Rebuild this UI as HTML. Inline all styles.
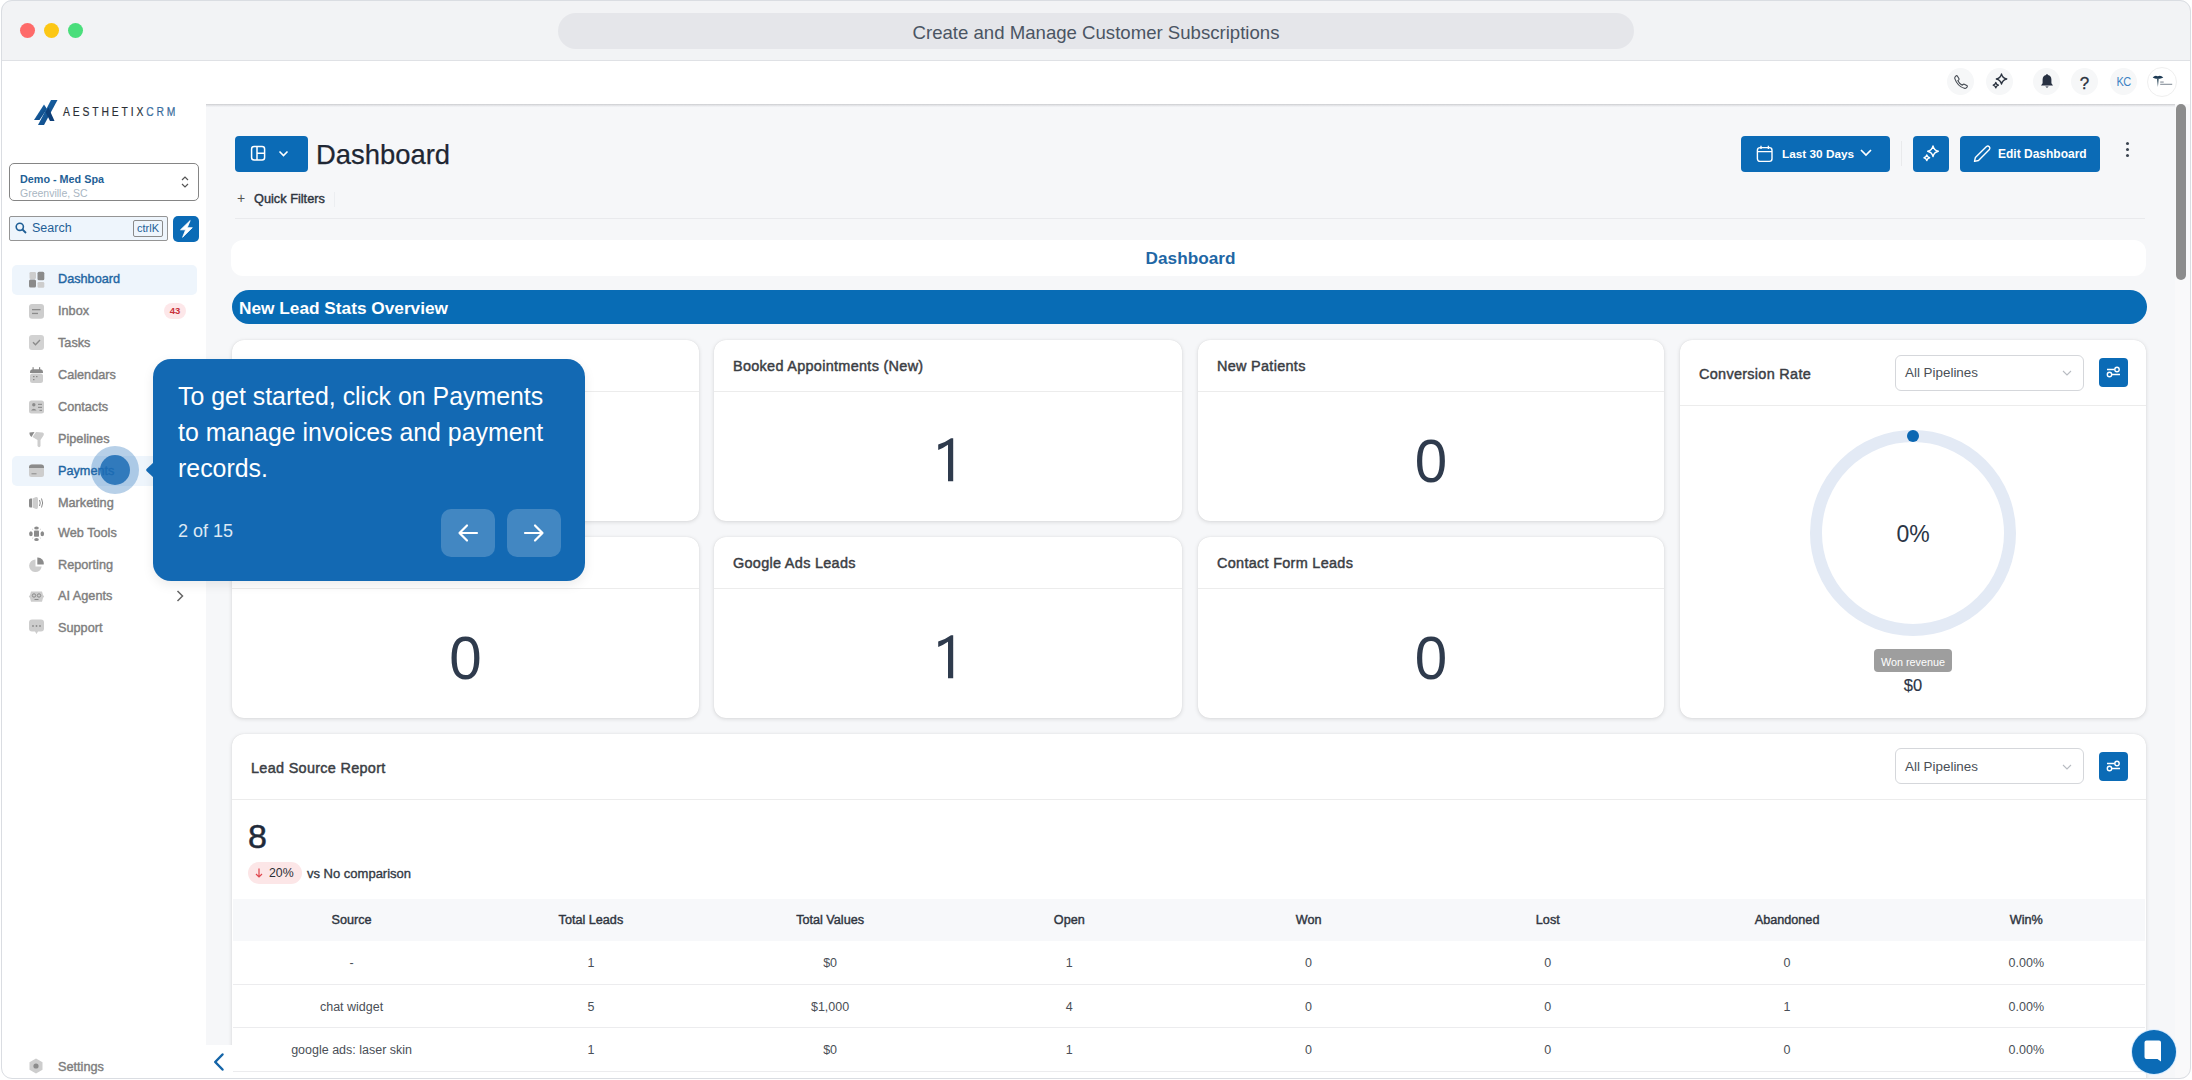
<!DOCTYPE html>
<html><head><meta charset="utf-8">
<style>
*{box-sizing:border-box;margin:0;padding:0}
html,body{width:2192px;height:1080px;overflow:hidden;background:#fff;font-family:"Liberation Sans",sans-serif}
.a{position:absolute}
#win{position:absolute;left:0;top:0;width:2192px;height:1080px;clip-path:inset(0px 1px 1px 1px round 11px);background:#fff}
#frame{position:absolute;left:1px;top:0px;width:2190px;height:1079px;border:1px solid #dadde2;border-radius:11px;pointer-events:none}
#titlebar{position:absolute;left:0;top:0;width:2192px;height:61px;background:#f2f3f5;border-bottom:1px solid #dfe1e5}
.tl{position:absolute;top:23px;width:15px;height:15px;border-radius:50%}
#pill{position:absolute;left:558px;top:13px;width:1076px;height:36px;border-radius:18px;background:#e5e6ea;color:#4b5563;font-size:18.6px;text-align:center;line-height:39px}
#main{position:absolute;left:206px;top:104px;width:1986px;height:976px;background:#f6f7f9;overflow:hidden}
#hdrshadow{position:absolute;left:206px;top:104px;width:1986px;height:3px;background:linear-gradient(#cbcccf,#e6e7ea 55%,#f4f5f7)}
.hic{position:absolute;top:68px;width:27px;height:27px;border-radius:50%;background:#f6f7f8}
.nav{position:absolute;left:11px;width:186px;height:30px;border-radius:5px}
.nav svg{position:absolute;left:18px;top:7px;width:15px;height:16px}
.nav .tx{position:absolute;left:46px;top:0;line-height:30px;font-size:12.2px;font-weight:bold;color:#7b7b7b;white-space:nowrap}
.navt{left:58px;line-height:17px;font-size:12.7px;font-weight:normal;-webkit-text-stroke:0.4px #7e7e7e;color:#7e7e7e;white-space:nowrap}
.th{width:200px;text-align:center;font-size:12.65px;-webkit-text-stroke:0.4px #2f3540;color:#2f3540;line-height:15px;white-space:nowrap;margin-top:1px}
.td{width:200px;text-align:center;font-size:12.5px;color:#4a4f57;line-height:15px;white-space:nowrap;margin-top:1px}
.card{position:absolute;background:#fff;border-radius:12px;box-shadow:0 1px 4px rgba(0,0,0,0.13),0 0 1px rgba(0,0,0,0.10)}
.card .ct{position:absolute;left:19px;top:1px;height:51px;line-height:51px;font-size:14.45px;font-weight:normal;-webkit-text-stroke:0.45px #3b3e44;color:#3b3e44;letter-spacing:0.3px;white-space:nowrap}
.card .dv{position:absolute;left:0;top:51px;width:100%;height:1px;background:#ececec}
.card .num{position:absolute;left:0;width:100%;text-align:center;font-size:62px;color:#2f3b4d;line-height:1;transform:scaleX(0.94)}
.btn{position:absolute;background:#0b6bb6;border-radius:4px;color:#fff}
</style></head><body>
<div id="win">
  <div id="titlebar">
    <div class="tl" style="left:20px;background:#fe6a69"></div>
    <div class="tl" style="left:44px;background:#fcc715"></div>
    <div class="tl" style="left:68px;background:#4ade7b"></div>
    <div id="pill">Create and Manage Customer Subscriptions</div>
  </div>
  <!-- HEADER -->
  <div class="a" style="left:0;top:61px;width:2192px;height:43px;background:#fff"></div>
  <div class="hic" style="left:1947px"></div>
  <div class="hic" style="left:1986px"></div>
  <div class="hic" style="left:2033px"></div>
  <div class="hic" style="left:2071px"></div>
  <div class="hic" style="left:2110px"></div>
  <div class="hic" style="left:2147px;top:67px;width:30px;height:30px;background:#fff;border:1px solid #efefef"></div>
  <svg class="a" style="left:1953px;top:74px" width="16" height="16" viewBox="0 0 16 16"><path d="M4.2 1.8 L6 4.8 Q6.3 5.5 5.6 6.1 L4.9 6.7 Q6.4 9.8 9.3 11.2 L10 10.5 Q10.6 9.9 11.3 10.2 L14.2 11.8 Q14.6 12.2 14.2 12.8 L13.3 13.9 Q12.5 14.6 11.3 14.3 Q4.5 12.2 1.8 4.6 Q1.5 3.4 2.3 2.6 L3.3 1.8 Q3.8 1.4 4.2 1.8 Z" fill="none" stroke="#444a52" stroke-width="1.1"/></svg>
  <svg class="a" style="left:1991px;top:73px" width="18" height="17" viewBox="0 0 18 17"><path d="M10.5 1 Q11.5 5.2 15.8 6 Q11.5 7 10.5 11 Q9.5 7 5.3 6 Q9.5 5.2 10.5 1 Z" fill="none" stroke="#2b3340" stroke-width="1.3" stroke-linejoin="round"/><path d="M4.8 9.5 Q5.3 11.6 7.4 12.2 Q5.3 12.8 4.8 14.9 Q4.3 12.8 2.2 12.2 Q4.3 11.6 4.8 9.5 Z" fill="none" stroke="#2b3340" stroke-width="1.3" stroke-linejoin="round"/></svg>
  <svg class="a" style="left:2039px;top:73px" width="16" height="17" viewBox="0 0 16 17"><path d="M8 1 Q8.8 1 8.9 1.9 Q12.3 2.6 12.4 6.5 L12.4 10.2 L14 12.6 L2 12.6 L3.6 10.2 L3.6 6.5 Q3.7 2.6 7.1 1.9 Q7.2 1 8 1 Z" fill="#283142"/><path d="M6.3 13.6 Q8 15.8 9.7 13.6 Z" fill="#283142"/></svg>
  <div class="a" style="left:2071px;top:71.5px;width:27px;text-align:center;font-size:17px;color:#2b3340;line-height:24px;-webkit-text-stroke:0.3px #2b3340">?</div>
  <div class="a" style="left:2110px;top:70px;width:27px;text-align:center;font-size:12.5px;color:#3d82c4;line-height:24px;letter-spacing:-0.8px;transform:scaleX(0.88)">KC</div>
  <svg class="a" style="left:2150px;top:73px" width="26" height="16" viewBox="0 0 26 16"><path d="M2.7 4.6 Q5 1.6 7.8 3.3 Q10.6 1.6 13.3 4.6 Q10.5 6.4 7.8 5.4 Q5.1 6.4 2.7 4.6 Z" fill="#1e3b55"/><path d="M7 5.3 L8.7 5.3 L7.9 14 Z" fill="#2a4658"/><rect x="10.2" y="8.6" width="3.5" height="0.9" fill="#6b7783"/><rect x="10.2" y="10.8" width="12" height="0.9" fill="#6b7783"/></svg>
  <!-- MAIN -->
  <div id="main"></div>
  <div id="hdrshadow"></div>
  <!-- title row -->
  <div class="btn" style="left:235px;top:136px;width:73px;height:36px"></div>
  <svg class="a" style="left:250px;top:145px" width="40" height="18" viewBox="0 0 40 18"><rect x="1.6" y="1.6" width="13" height="13.5" rx="2.5" fill="none" stroke="#fff" stroke-width="1.5"/><path d="M7 1.6 L7 15 M7 8.3 L14.6 8.3" stroke="#fff" stroke-width="1.5"/><path d="M29.5 6.5 L33.5 10.5 L37.5 6.5" fill="none" stroke="#fff" stroke-width="1.6"/></svg>
  <div class="a" style="left:316px;top:137px;font-size:27.4px;color:#1f2733;line-height:36px;-webkit-text-stroke:0.25px #1f2733;white-space:nowrap">Dashboard</div>
  <div class="a" style="left:237px;top:190px;font-size:14px;color:#555;line-height:16px">+</div>
  <div class="a" style="left:254px;top:190.5px;font-size:12.75px;-webkit-text-stroke:0.4px #2e3540;color:#2e3540;line-height:15px;white-space:nowrap">Quick Filters</div>
  <div class="a" style="left:334px;top:192px;width:1px;height:15px;background:#eceef1"></div>
  <div class="a" style="left:235px;top:218px;width:1910px;height:1px;background:#e9eaed"></div>
  <!-- right buttons -->
  <div class="btn" style="left:1741px;top:136px;width:149px;height:36px"></div>
  <svg class="a" style="left:1756px;top:145px" width="18" height="18" viewBox="0 0 18 18"><rect x="1.4" y="2.6" width="14.6" height="13.8" rx="2.6" fill="none" stroke="#fff" stroke-width="1.4"/><path d="M1.4 6.6 L16 6.6 M5 0.8 L5 4 M12.4 0.8 L12.4 4" stroke="#fff" stroke-width="1.4"/></svg>
  <div class="a" style="left:1782px;top:146px;font-size:11.8px;font-weight:bold;color:#fff;line-height:16px;white-space:nowrap">Last 30 Days</div>
  <svg class="a" style="left:1859px;top:147px" width="14" height="12" viewBox="0 0 14 12"><path d="M2 3 L7 8 L12 3" fill="none" stroke="#fff" stroke-width="1.7"/></svg>
  <div class="a" style="left:1901px;top:141px;width:1px;height:25px;background:#e9eaec"></div>
  <div class="btn" style="left:1913px;top:136px;width:36px;height:36px"></div>
  <svg class="a" style="left:1921px;top:144px" width="20" height="20" viewBox="0 0 20 20"><path d="M12 2 Q13 6.3 17.3 7.3 Q13 8.3 12 12.5 Q11 8.3 6.7 7.3 Q11 6.3 12 2 Z" fill="none" stroke="#fff" stroke-width="1.4" stroke-linejoin="round"/><path d="M5.8 11 Q6.3 13.3 8.6 13.8 Q6.3 14.3 5.8 16.6 Q5.3 14.3 3 13.8 Q5.3 13.3 5.8 11 Z" fill="none" stroke="#fff" stroke-width="1.4" stroke-linejoin="round"/></svg>
  <div class="btn" style="left:1960px;top:136px;width:140px;height:36px"></div>
  <svg class="a" style="left:1972px;top:144px" width="20" height="20" viewBox="0 0 20 20"><path d="M14.5 2.5 Q16 1.5 17.3 2.8 Q18.5 4.2 17.4 5.6 L6.5 16.5 L2.5 17.4 L3.4 13.4 Z" fill="none" stroke="#fff" stroke-width="1.4" stroke-linejoin="round"/></svg>
  <div class="a" style="left:1998px;top:146px;font-size:12px;font-weight:bold;color:#fff;line-height:16px;white-space:nowrap">Edit Dashboard</div>
  <div class="a" style="left:2125.5px;top:141.5px;width:3.5px;height:3.5px;border-radius:50%;background:#3b4450"></div>
  <div class="a" style="left:2125.5px;top:147.5px;width:3.5px;height:3.5px;border-radius:50%;background:#3b4450"></div>
  <div class="a" style="left:2125.5px;top:153.5px;width:3.5px;height:3.5px;border-radius:50%;background:#3b4450"></div>
  <!-- scrollbar -->
  <div class="a" style="left:2175px;top:104px;width:15px;height:976px;background:#f9f9fa"></div>
  <div class="a" style="left:2176px;top:104px;width:10px;height:176px;border-radius:5px;background:#8c8c8c"></div>
  <!-- dashboard label -->
  <div class="a" style="left:231px;top:240px;width:1915px;height:36px;border-radius:12px;background:#fff"></div>
  <div class="a" style="left:231px;top:248px;width:1919px;text-align:center;font-size:17.2px;font-weight:bold;color:#1f67a5;line-height:20px">Dashboard</div>
  <!-- section bar -->
  <div class="a" style="left:232px;top:290px;width:1915px;height:34px;border-radius:17px;background:#086cb5"></div>
  <div class="a" style="left:239px;top:298px;font-size:17.25px;font-weight:bold;color:#fff;line-height:21px;white-space:nowrap">New Lead Stats Overview</div>
  <!-- cards row 1 -->
  <div class="card" style="left:232px;top:340px;width:467px;height:181px"><div class="dv"></div><div class="num" style="top:89.5px">0</div></div>
  <div class="card" style="left:714px;top:340px;width:468px;height:181px"><div class="ct">Booked Appointments (New)</div><div class="dv"></div></div><svg class="a" style="left:938px;top:438px" width="20" height="46" viewBox="0 0 20 46"><path d="M15.2 0.2 L15.2 43.2 L10 43.2 L10 6.8 Q5.5 10 0.2 12 L0.2 6.6 Q7 4.5 13 0.2 Z" fill="#2f3b4d"/></svg>
  <div class="card" style="left:1198px;top:340px;width:466px;height:181px"><div class="ct">New Patients</div><div class="dv"></div><div class="num" style="top:89.5px">0</div></div>
  <div class="card" style="left:232px;top:537px;width:467px;height:181px"><div class="ct">Paid Ads Leads</div><div class="dv"></div><div class="num" style="top:89.5px">0</div></div>
  <div class="card" style="left:714px;top:537px;width:468px;height:181px"><div class="ct">Google Ads Leads</div><div class="dv"></div></div><svg class="a" style="left:938px;top:635px" width="20" height="46" viewBox="0 0 20 46"><path d="M15.2 0.2 L15.2 43.2 L10 43.2 L10 6.8 Q5.5 10 0.2 12 L0.2 6.6 Q7 4.5 13 0.2 Z" fill="#2f3b4d"/></svg>
  <div class="card" style="left:1198px;top:537px;width:466px;height:181px"><div class="ct">Contact Form Leads</div><div class="dv"></div><div class="num" style="top:89.5px">0</div></div>
  <!-- conversion card -->
  <div class="card" style="left:1680px;top:340px;width:466px;height:378px"><div class="ct" style="height:66px;line-height:66px">Conversion Rate</div><div class="dv" style="top:65px"></div></div>
  <div class="a" style="left:1895px;top:355px;width:189px;height:36px;border:1px solid #d5d7db;border-radius:6px;background:#fff"></div>
  <div class="a" style="left:1905px;top:365px;font-size:13.4px;color:#4a4f57;line-height:16px;white-space:nowrap">All Pipelines</div>
  <svg class="a" style="left:2061px;top:368px" width="12" height="10" viewBox="0 0 12 10"><path d="M2 3 L6 7 L10 3" fill="none" stroke="#b8bcc2" stroke-width="1.1"/></svg>
  <div class="btn" style="left:2099px;top:358px;width:29px;height:29px"></div>
  <svg class="a" style="left:2104px;top:364px" width="19" height="17" viewBox="0 0 19 17"><path d="M3 5.5 L10.5 5.5 M8 10.5 L16 10.5" stroke="#fff" stroke-width="1.4"/><circle cx="13" cy="5.5" r="2.2" fill="none" stroke="#fff" stroke-width="1.4"/><circle cx="5.5" cy="10.5" r="2.2" fill="none" stroke="#fff" stroke-width="1.4"/></svg>
  <svg class="a" style="left:1803px;top:423px" width="220" height="220" viewBox="0 0 220 220"><circle cx="110" cy="110" r="97" fill="none" stroke="#e3eaf5" stroke-width="12"/><circle cx="110" cy="13" r="6" fill="#0b67b2"/></svg>
  <div class="a" style="left:1813px;top:523px;width:200px;text-align:center;font-size:23px;color:#2b3646;line-height:22px">0%</div>
  <div class="a" style="left:1874px;top:649px;width:78px;height:23px;border-radius:4px;background:#9e9e9e;color:#fff;text-align:center;font-size:10.8px;line-height:26px">Won revenue</div>
  <div class="a" style="left:1813px;top:676px;width:200px;text-align:center;font-size:16.5px;color:#2b3646;line-height:19px;-webkit-text-stroke:0.15px #2b3646">$0</div>
  <!-- lead source card -->
  <div class="card" style="left:232px;top:734px;width:1914px;height:400px"><div class="ct" style="height:66px;line-height:66px">Lead Source Report</div><div class="dv" style="top:65px"></div></div>
  <div class="a" style="left:1895px;top:748px;width:189px;height:36px;border:1px solid #d5d7db;border-radius:6px;background:#fff"></div>
  <div class="a" style="left:1905px;top:759px;font-size:13.4px;color:#4a4f57;line-height:16px;white-space:nowrap">All Pipelines</div>
  <svg class="a" style="left:2061px;top:762px" width="12" height="10" viewBox="0 0 12 10"><path d="M2 3 L6 7 L10 3" fill="none" stroke="#b8bcc2" stroke-width="1.1"/></svg>
  <div class="btn" style="left:2099px;top:752px;width:29px;height:29px"></div>
  <svg class="a" style="left:2104px;top:758px" width="19" height="17" viewBox="0 0 19 17"><path d="M3 5.5 L10.5 5.5 M8 10.5 L16 10.5" stroke="#fff" stroke-width="1.4"/><circle cx="13" cy="5.5" r="2.2" fill="none" stroke="#fff" stroke-width="1.4"/><circle cx="5.5" cy="10.5" r="2.2" fill="none" stroke="#fff" stroke-width="1.4"/></svg>
  <div class="a" style="left:248px;top:818px;font-size:34px;color:#1f2a3a;line-height:36px;-webkit-text-stroke:0.5px #1f2a3a">8</div>
  <div class="a" style="left:248px;top:862px;width:54px;height:22px;border-radius:11px;background:#fce6e7"></div>
  <svg class="a" style="left:254px;top:867px" width="10" height="12" viewBox="0 0 10 12"><path d="M5 1.5 L5 10 M2 7 L5 10 L8 7" fill="none" stroke="#e0484f" stroke-width="1.2"/></svg>
  <div class="a" style="left:269px;top:866px;font-size:12.3px;color:#2b2f36;line-height:15px">20%</div>
  <div class="a" style="left:307px;top:866px;font-size:13px;color:#333a44;line-height:15px;white-space:nowrap;-webkit-text-stroke:0.35px #333a44">vs No comparison</div>
  <!-- table -->
  <div class="a" style="left:233px;top:899px;width:1912px;height:42px;background:#f7f8fa"></div>
  <div class="a" style="left:233px;top:984px;width:1912px;height:1px;background:#ececee"></div>
  <div class="a" style="left:233px;top:1027px;width:1912px;height:1px;background:#ececee"></div>
  <div class="a" style="left:233px;top:1071px;width:1912px;height:1px;background:#ececee"></div>
  <div class="a th" style="left:251.6px;top:912px">Source</div>
  <div class="a th" style="left:490.9px;top:912px">Total Leads</div>
  <div class="a th" style="left:730.1px;top:912px">Total Values</div>
  <div class="a th" style="left:969.3px;top:912px">Open</div>
  <div class="a th" style="left:1208.6px;top:912px">Won</div>
  <div class="a th" style="left:1447.8px;top:912px">Lost</div>
  <div class="a th" style="left:1687.1px;top:912px">Abandoned</div>
  <div class="a th" style="left:1926.3px;top:912px">Win%</div>
  <div class="a td" style="left:251.6px;top:955px">-</div>
  <div class="a td" style="left:490.9px;top:955px">1</div>
  <div class="a td" style="left:730.1px;top:955px">$0</div>
  <div class="a td" style="left:969.3px;top:955px">1</div>
  <div class="a td" style="left:1208.6px;top:955px">0</div>
  <div class="a td" style="left:1447.8px;top:955px">0</div>
  <div class="a td" style="left:1687.1px;top:955px">0</div>
  <div class="a td" style="left:1926.3px;top:955px">0.00%</div>
  <div class="a td" style="left:251.6px;top:999px">chat widget</div>
  <div class="a td" style="left:490.9px;top:999px">5</div>
  <div class="a td" style="left:730.1px;top:999px">$1,000</div>
  <div class="a td" style="left:969.3px;top:999px">4</div>
  <div class="a td" style="left:1208.6px;top:999px">0</div>
  <div class="a td" style="left:1447.8px;top:999px">0</div>
  <div class="a td" style="left:1687.1px;top:999px">1</div>
  <div class="a td" style="left:1926.3px;top:999px">0.00%</div>
  <div class="a td" style="left:251.6px;top:1042px">google ads: laser skin</div>
  <div class="a td" style="left:490.9px;top:1042px">1</div>
  <div class="a td" style="left:730.1px;top:1042px">$0</div>
  <div class="a td" style="left:969.3px;top:1042px">1</div>
  <div class="a td" style="left:1208.6px;top:1042px">0</div>
  <div class="a td" style="left:1447.8px;top:1042px">0</div>
  <div class="a td" style="left:1687.1px;top:1042px">0</div>
  <div class="a td" style="left:1926.3px;top:1042px">0.00%</div>
  <!-- SIDEBAR -->
  <div class="a" style="left:0;top:61px;width:206px;height:1019px;background:#fff"></div>
  <!-- logo -->
  <svg class="a" style="left:33px;top:99px" width="26" height="27" viewBox="0 0 26 27">
    <defs><linearGradient id="lg" x1="0" y1="0" x2="1" y2="1"><stop offset="0" stop-color="#1a6fb5"/><stop offset="1" stop-color="#0d3f78"/></linearGradient></defs>
    <polygon points="1,21 11,5.5 14,10 6.5,21" fill="url(#lg)"/>
    <polygon points="18,1 24.5,1 11,26 5,26" fill="url(#lg)"/>
    <polygon points="12.5,13 15.5,8.5 21.5,22 17,22" fill="#0d3f78"/>
  </svg>
  <div class="a" style="left:63px;top:103px;font-size:12.6px;letter-spacing:3.5px;color:#2b2f36;white-space:nowrap;line-height:18px;transform:scaleX(0.82);transform-origin:left;-webkit-text-stroke:0.2px #2b2f36">AESTHETIX<span style="color:#3d82c4">CRM</span></div>
  <!-- location -->
  <div class="a" style="left:9px;top:163px;width:190px;height:38px;border:1px solid #858585;border-radius:5px;background:#fff"></div>
  <div class="a" style="left:20px;top:172px;font-size:10.8px;font-weight:bold;color:#1f5f96;white-space:nowrap;line-height:14px">Demo - Med Spa</div>
  <div class="a" style="left:20px;top:187px;font-size:10.5px;color:#a9b6c2;white-space:nowrap;line-height:13px">Greenville, SC</div>
  <svg class="a" style="left:180px;top:175px" width="10" height="14" viewBox="0 0 10 14"><path d="M2 5 L5 2 L8 5 M2 9 L5 12 L8 9" fill="none" stroke="#555" stroke-width="1.2"/></svg>
  <!-- search -->
  <div class="a" style="left:9px;top:216px;width:159px;height:25px;border:1px solid #959595;border-radius:2px;background:#eef5fc"></div>
  <svg class="a" style="left:15px;top:222px" width="12" height="12" viewBox="0 0 12 12"><circle cx="4.8" cy="4.8" r="3.6" fill="none" stroke="#1f5f96" stroke-width="1.6"/><path d="M7.5 7.5 L11 11" stroke="#1f5f96" stroke-width="1.8"/></svg>
  <div class="a" style="left:32px;top:221px;font-size:12.5px;color:#1f5f96;line-height:15px">Search</div>
  <div class="a" style="left:133px;top:220px;width:30px;height:17px;border:1px solid #8a8a8a;border-radius:2px;font-size:11px;color:#1f5f96;text-align:center;line-height:15px">ctrlK</div>
  <div class="a" style="left:173px;top:216px;width:26px;height:26px;border-radius:5px;background:#0b6bb6"></div>
  <svg class="a" style="left:177px;top:219px" width="18" height="20" viewBox="0 0 18 20"><path d="M13.2 1.5 L3.5 10.8 L8.6 10.8 L5.6 18.3 L15.3 8.7 L10.2 8.7 Z" fill="#fff" stroke="#fff" stroke-width="0.8" stroke-linejoin="round"/></svg>
  <!-- nav -->
  <div class="a" style="left:12px;top:265px;width:185px;height:30px;border-radius:5px;background:#eef5fc"></div>
  <div class="a" style="left:12px;top:456px;width:185px;height:30px;border-radius:5px;background:#eef5fc"></div>
  <div class="a" style="left:58px;top:271px;line-height:17px;font-size:12.7px;-webkit-text-stroke:0.4px #1f66a3;color:#1f66a3">Dashboard</div>
  <div class="a navt" style="top:303px">Inbox</div>
  <div class="a navt" style="top:335px">Tasks</div>
  <div class="a navt" style="top:367px">Calendars</div>
  <div class="a navt" style="top:399px">Contacts</div>
  <div class="a navt" style="top:431px">Pipelines</div>
  <div class="a" style="left:58px;top:463px;line-height:17px;font-size:12.7px;-webkit-text-stroke:0.4px #1f66a3;color:#1f66a3">Payments</div>
  <div class="a navt" style="top:495px">Marketing</div>
  <div class="a navt" style="top:525px">Web Tools</div>
  <div class="a navt" style="top:557px">Reporting</div>
  <div class="a navt" style="top:588px">AI Agents</div>
  <div class="a navt" style="top:620px">Support</div>
  <div class="a navt" style="top:1059px">Settings</div>
  <div class="a" style="left:164px;top:303px;width:22px;height:16px;border-radius:8px;background:#fde7e9;color:#c8323a;font-size:9.5px;font-weight:bold;text-align:center;line-height:16px">43</div>
  <svg class="a" style="left:175px;top:589px" width="10" height="14" viewBox="0 0 10 14"><path d="M2.5 2 L7.5 7 L2.5 12" fill="none" stroke="#666" stroke-width="1.5"/></svg>
  <!-- icons -->
  <svg class="a" style="left:29px;top:271px" width="16" height="17" viewBox="0 0 16 17">
    <rect x="0.5" y="1" width="6.5" height="7" rx="1.3" fill="#cdcdcd"/><rect x="8.5" y="0.8" width="6.8" height="8.5" rx="1.5" fill="#8b8b8b"/>
    <rect x="0" y="8.5" width="7" height="8" rx="1.5" fill="#8b8b8b"/><rect x="8.5" y="11" width="6.8" height="5.8" rx="1.3" fill="#cdcdcd"/>
  </svg>
  <svg class="a" style="left:29px;top:304px" width="16" height="16" viewBox="0 0 16 16">
    <rect x="0" y="0" width="15" height="14.8" rx="3" fill="#cdcdcd"/><rect x="3" y="5" width="8.5" height="1.3" fill="#8b8b8b"/><rect x="3" y="8.8" width="6" height="1.3" fill="#8b8b8b"/>
  </svg>
  <svg class="a" style="left:29px;top:335px" width="16" height="16" viewBox="0 0 16 16">
    <rect x="0" y="0" width="15" height="15" rx="3" fill="#d2d2d2"/><path d="M4 7.3 L6.5 9.8 L11 5" fill="none" stroke="#8b8b8b" stroke-width="1.4"/>
  </svg>
  <svg class="a" style="left:29px;top:367px" width="16" height="16" viewBox="0 0 16 16">
    <rect x="1" y="6.5" width="13" height="9.5" rx="2.5" fill="#cdcdcd"/><path d="M1 5.2 Q1 2.3 4 2.3 L11 2.3 Q14 2.3 14 5.2 L14 6 L1 6 Z" fill="#8b8b8b"/>
    <rect x="3.5" y="0.2" width="1.2" height="3" fill="#8b8b8b"/><rect x="10" y="0.2" width="1.2" height="3" fill="#8b8b8b"/>
    <rect x="4" y="9" width="1.5" height="1.2" fill="#8b8b8b"/><rect x="7" y="9" width="1.5" height="1.2" fill="#8b8b8b"/><rect x="4" y="12" width="1.5" height="1.2" fill="#8b8b8b"/>
  </svg>
  <svg class="a" style="left:29px;top:400px" width="16" height="15" viewBox="0 0 16 15">
    <rect x="0" y="0.5" width="15" height="13" rx="2.5" fill="#cdcdcd"/><circle cx="4.8" cy="4.8" r="1.7" fill="#8b8b8b"/><path d="M2 10.5 Q4.8 7 7.6 10.5 Z" fill="#8b8b8b"/>
    <rect x="9" y="3.8" width="4" height="1.1" fill="#8b8b8b"/><rect x="9" y="6.8" width="4" height="1.1" fill="#8b8b8b"/><rect x="10.5" y="9.8" width="2.5" height="1.1" fill="#8b8b8b"/>
  </svg>
  <svg class="a" style="left:29px;top:431px" width="16" height="17" viewBox="0 0 16 17">
    <path d="M0.5 1.5 L5.5 1 L2.5 6 Q1 5 0.5 3 Z" fill="#8b8b8b"/><path d="M7 1 L13.5 1.5 Q15.5 2 14.5 4.5 L11.5 9 L11.5 15 Q11 16.5 9.5 16 L8.5 15 L8.5 9 L3.5 6 Z" fill="#cdcdcd"/>
  </svg>
  <svg class="a" style="left:29px;top:464px" width="16" height="14" viewBox="0 0 16 14">
    <rect x="0" y="0.5" width="15" height="12.5" rx="2.5" fill="#cdcdcd"/><path d="M0 3.5 Q0 0.5 3 0.5 L12 0.5 Q15 0.5 15 3.5 L15 4 L0 4 Z" fill="#8b8b8b"/><rect x="2.5" y="9.3" width="5" height="1" fill="#8b8b8b"/>
  </svg>
  <svg class="a" style="left:28px;top:496px" width="17" height="14" viewBox="0 0 17 14">
    <path d="M1 4 Q1 2.5 2.5 2.5 L4 2.5 L4 11.5 L2.5 11.5 Q1 11.5 1 10 Z" fill="#8b8b8b"/><path d="M4.5 2.5 L8 1 Q10 0.5 10 3 L10 11 Q10 13.5 8 13 L4.5 11.5 Z" fill="#cdcdcd"/>
    <path d="M11.5 4 Q13 7 11.5 10" fill="none" stroke="#8b8b8b" stroke-width="1"/><path d="M13.5 2.5 Q15.8 7 13.5 11.5" fill="none" stroke="#8b8b8b" stroke-width="1"/>
  </svg>
  <svg class="a" style="left:29px;top:526px" width="16" height="16" viewBox="0 0 16 16">
    <path d="M3 2.8 L4.3 4 M12 2.8 L10.7 4 M3 12.6 L4.3 11.4 M12 12.6 L10.7 11.4" stroke="#d4d4d4" stroke-width="1"/>
    <ellipse cx="7.5" cy="1.9" rx="2.3" ry="1.5" fill="#8b8b8b"/><rect x="5" y="4.6" width="5" height="6.2" rx="0.8" fill="#8b8b8b"/>
    <ellipse cx="1.9" cy="7.7" rx="1.8" ry="2.5" fill="#8b8b8b"/><ellipse cx="13.3" cy="7.7" rx="1.8" ry="2.5" fill="#8b8b8b"/><ellipse cx="7.5" cy="13.6" rx="2.3" ry="1.5" fill="#8b8b8b"/>
  </svg>
  <svg class="a" style="left:29px;top:557px" width="16" height="16" viewBox="0 0 16 16">
    <path d="M6.5 2.5 A6.3 6.3 0 1 0 12.7 9.5 L6.5 9.5 Z" fill="#cdcdcd"/><path d="M8.3 0.5 A6 6 0 0 1 14.7 7.5 L8.3 7.5 Z" fill="#8b8b8b"/>
  </svg>
  <svg class="a" style="left:28px;top:591px" width="17" height="12" viewBox="0 0 17 12">
    <path d="M3 0.5 L14 0.5 L15 4 L16.2 5.5 L15 7 L14 10.8 L3 10.8 L2 7 L0.8 5.5 L2 4 Z" fill="#cdcdcd"/><circle cx="6" cy="4.5" r="1.7" fill="none" stroke="#8b8b8b" stroke-width="1"/><circle cx="11" cy="4.5" r="1.7" fill="none" stroke="#8b8b8b" stroke-width="1"/><rect x="6.5" y="8" width="4" height="1" fill="#8b8b8b"/>
  </svg>
  <svg class="a" style="left:29px;top:619px" width="16" height="16" viewBox="0 0 16 16">
    <path d="M3 0.5 L12 0.5 Q15 0.5 15 3.5 L15 9.5 Q15 12.5 12 12.5 L9 12.5 L7.5 15 L6 12.5 L3 12.5 Q0 12.5 0 9.5 L0 3.5 Q0 0.5 3 0.5 Z" fill="#cdcdcd"/><circle cx="4" cy="7" r="0.9" fill="#8b8b8b"/><circle cx="7.5" cy="7" r="0.9" fill="#8b8b8b"/><circle cx="11" cy="7" r="0.9" fill="#8b8b8b"/>
  </svg>
  <svg class="a" style="left:28px;top:1058px" width="16" height="16" viewBox="0 0 16 16">
    <path d="M8 0.5 L14.5 4.2 L14.5 11.8 L8 15.5 L1.5 11.8 L1.5 4.2 Z" fill="#cdcdcd"/><circle cx="8" cy="8" r="2.6" fill="#8b8b8b"/>
  </svg>
  <!-- bottom white strip over content + chevron -->
  <div class="a" style="left:206px;top:1045px;width:26px;height:35px;background:#fff"></div>
  <svg class="a" style="left:211px;top:1052px" width="16" height="20" viewBox="0 0 16 20"><path d="M11.5 2.5 L4.2 10 L11.5 17.5" fill="none" stroke="#1565a8" stroke-width="2.5" stroke-linecap="round" stroke-linejoin="round"/></svg>
  <!-- TOOLTIP -->
  <div class="a" style="left:100px;top:455px;width:30px;height:30px;border-radius:50%;background:rgba(26,108,180,0.85)"></div>
  <div class="a" style="left:91px;top:446px;width:48px;height:48px;border-radius:50%;background:rgba(30,110,185,0.32)"></div>
  <div class="a" style="left:153px;top:359px;width:432px;height:222px;border-radius:18px;background:#1369b3;box-shadow:0 4px 12px rgba(0,0,0,0.08)"></div>
  <svg class="a" style="left:145px;top:461px" width="10" height="18" viewBox="0 0 10 18"><path d="M9 1 L1.5 8 Q0.8 9 1.5 10 L9 17 Z" fill="#1369b3"/></svg>
  <div class="a" style="left:178px;top:378px;width:400px;font-size:24.9px;color:#fff;line-height:36px">To get started, click on Payments<br>to manage invoices and payment<br>records.</div>
  <div class="a" style="left:178px;top:520px;font-size:18px;color:#dce8f4;line-height:22px">2 of 15</div>
  <div class="a" style="left:441px;top:509px;width:54px;height:48px;border-radius:10px;background:rgba(255,255,255,0.2)"></div>
  <div class="a" style="left:507px;top:509px;width:54px;height:48px;border-radius:10px;background:rgba(255,255,255,0.2)"></div>
  <svg class="a" style="left:456px;top:522px" width="24" height="22" viewBox="0 0 24 22"><path d="M21 11 L3.5 11 M11 3.5 L3.5 11 L11 18.5" fill="none" stroke="#fff" stroke-width="2.2" stroke-linecap="round" stroke-linejoin="round"/></svg>
  <svg class="a" style="left:522px;top:522px" width="24" height="22" viewBox="0 0 24 22"><path d="M3 11 L20.5 11 M13 3.5 L20.5 11 L13 18.5" fill="none" stroke="#fff" stroke-width="2.2" stroke-linecap="round" stroke-linejoin="round"/></svg>
  <div class="a" style="left:2132px;top:1030px;width:44px;height:44px;border-radius:50%;background:#0b6bb6;box-shadow:0 0 0 1px #d8ecff"></div>
  <svg class="a" style="left:2143px;top:1040px" width="22" height="24" viewBox="0 0 22 24"><path d="M3.5 0.5 L16 0.5 Q18 0.5 18 2.5 L18 21.5 L14.5 19 L3.5 19 Q1.5 19 1.5 17 L1.5 2.5 Q1.5 0.5 3.5 0.5 Z" fill="#fff"/></svg>
</div>
<div id="frame"></div>
</body></html>
